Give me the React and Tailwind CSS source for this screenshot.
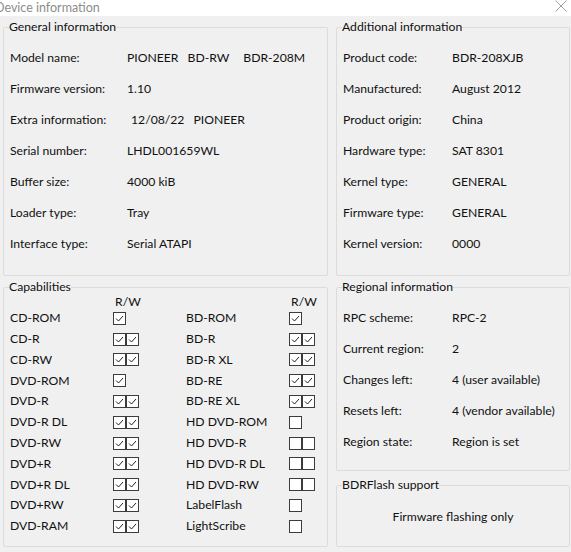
import React from 'react';

const general = [
  ['Model name:', <>PIONEER<span className="ml-[9px]">BD-RW</span><span className="ml-[14px]">BDR-208M</span></>],
  ['Firmware version:', '1.10'],
  ['Extra information:', <span className="pl-[4px]">12/08/22<span className="ml-[9px]">PIONEER</span></span>],
  ['Serial number:', 'LHDL001659WL'],
  ['Buffer size:', '4000 kiB'],
  ['Loader type:', 'Tray'],
  ['Interface type:', 'Serial ATAPI'],
];

const additional = [
  ['Product code:', 'BDR-208XJB'],
  ['Manufactured:', 'August 2012'],
  ['Product origin:', 'China'],
  ['Hardware type:', 'SAT 8301'],
  ['Kernel type:', 'GENERAL'],
  ['Firmware type:', 'GENERAL'],
  ['Kernel version:', '0000'],
];

const regional = [
  ['RPC scheme:', 'RPC-2'],
  ['Current region:', '2'],
  ['Changes left:', '4 (user available)'],
  ['Resets left:', '4 (vendor available)'],
  ['Region state:', 'Region is set'],
];

// [name, boxes]; each box true = checked
const capsLeft = [
  ['CD-ROM', [true]],
  ['CD-R', [true, true]],
  ['CD-RW', [true, true]],
  ['DVD-ROM', [true]],
  ['DVD-R', [true, true]],
  ['DVD-R DL', [true, true]],
  ['DVD-RW', [true, true]],
  ['DVD+R', [true, true]],
  ['DVD+R DL', [true, true]],
  ['DVD+RW', [true, true]],
  ['DVD-RAM', [true, true]],
];

const capsRight = [
  ['BD-ROM', [true]],
  ['BD-R', [true, true]],
  ['BD-R XL', [true, true]],
  ['BD-RE', [true, true]],
  ['BD-RE XL', [true, true]],
  ['HD DVD-ROM', [false]],
  ['HD DVD-R', [false, false]],
  ['HD DVD-R DL', [false, false]],
  ['HD DVD-RW', [false, false]],
  ['LabelFlash', [false]],
  ['LightScribe', [false]],
];

const Group = ({ title, className, children }) => (
  <fieldset className={`border border-[#dcdcdc] rounded-[2px] px-[6px] min-w-0 ${className}`}>
    <legend className="ml-[-1px] px-0 leading-[16px] text-[#111]">{title}</legend>
    {children}
  </fieldset>
);

const InfoRows = ({ rows, labelWidth }) => (
  <div className="flex flex-col pt-[8px]">
    {rows.map(([label, value]) => (
      <div key={label} className="flex items-center h-[31px]">
        <span className={`shrink-0 ${labelWidth}`}>{label}</span>
        <span className="whitespace-nowrap">{value}</span>
      </div>
    ))}
  </div>
);

const Box = ({ checked }) => (
  <span className="w-[13px] h-[13px] border border-[#3c3c3c] bg-white flex items-center justify-center">
    {checked && (
      <svg width="11" height="11" viewBox="0 0 11 11">
        <polyline points="2,5.5 4.5,8 9,3" fill="none" stroke="#222" strokeWidth="1" />
      </svg>
    )}
  </span>
);

const CapColumn = ({ items }) => (
  <div className="flex flex-col">
    <div className="flex h-[13px] leading-[13px]">
      <span className="w-[105px]" />
      <span>R/W</span>
    </div>
    {items.map(([name, boxes]) => (
      <div key={name} className="flex items-center h-[20.8px]">
        <span className="w-[103px] shrink-0">{name}</span>
        <div className="flex">
          {boxes.map((c, i) => (
            <Box key={i} checked={c} />
          ))}
        </div>
      </div>
    ))}
  </div>
);

export default function App() {
  return (
    <div
      className="w-[571px] h-[552px] flex flex-col bg-[#f0f0f0] text-[12.2px] text-[#111] overflow-hidden"
      style={{ fontFamily: 'Lato, "Noto Sans", sans-serif' }}
    >
      {/* title bar */}
      <div className="h-[16px] bg-white flex items-center justify-between shrink-0">
        <span className="ml-[-5px] text-[12.5px] leading-[12px] text-[#8c8c8c]">Device information</span>
        <svg width="12" height="12" viewBox="0 0 12 12" className="mr-[4px] mb-[4px]">
          <path d="M0.5 0.5 L11.5 11.5 M11.5 0.5 L0.5 11.5" stroke="#a0a0a0" strokeWidth="1" />
        </svg>
      </div>

      <div className="grid grid-cols-[325px_234px] gap-x-[8px] ml-[3px] mt-[3px]">
        <div className="flex flex-col gap-y-[3px]">
          <Group title="General information" className="h-[257px]">
            <InfoRows rows={general} labelWidth="w-[117px]" />
          </Group>
          <Group title="Capabilities" className="h-[268px]">
            <div className="flex">
              <div className="w-[176px] shrink-0">
                <CapColumn items={capsLeft} />
              </div>
              <CapColumn items={capsRight} />
            </div>
          </Group>
        </div>

        <div className="flex flex-col">
          <Group title="Additional information" className="h-[257px]">
            <InfoRows rows={additional} labelWidth="w-[109px]" />
          </Group>
          <Group title="Regional information" className="h-[192px] mt-[3px]">
            <InfoRows rows={regional} labelWidth="w-[109px]" />
          </Group>
          <Group title="BDRFlash support" className="h-[70px] mt-[6px]">
            <div className="pt-[16px] text-center leading-[16px]">Firmware flashing only</div>
          </Group>
        </div>
      </div>
    </div>
  );
}
